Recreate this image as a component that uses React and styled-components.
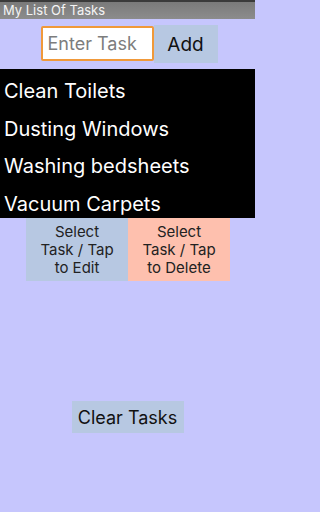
import React, { useState } from "react";
import styled, { createGlobalStyle } from "styled-components";

const GlobalStyle = createGlobalStyle`
  html, body {
    margin: 0;
    padding: 0;
    background-color: #c6c6fd;
  }
  body {
    font-family: "Inter", "Noto Sans", sans-serif;
  }
`;

const Screen = styled.div`
  width: 255px;
  height: 512px;
  display: flex;
  flex-direction: column;
  background-color: #c6c6fd;
`;

const TitleBar = styled.div`
  height: 17px;
  border-top: 2px solid #3a3a3a;
  background: linear-gradient(#7a7a7a, #8c8c8c);
  color: #f4f4f4;
  font-size: 13px;
  line-height: 17px;
  padding-left: 3px;
`;

const AddRow = styled.form`
  display: flex;
  justify-content: center;
  align-items: flex-start;
  padding-top: 6px;
  height: 44px;
  padding-left: 3px;
`;

const TaskInput = styled.input`
  box-sizing: border-box;
  width: 113px;
  height: 35px;
  margin-top: 1px;
  border: 2px solid #f0993a;
  border-radius: 2px;
  background: #fff;
  padding: 0 5px;
  font-family: inherit;
  font-size: 18px;
  color: #333;
  outline: none;

  &::placeholder {
    color: #7d7d7d;
  }
`;

const AddButton = styled.button`
  width: 64px;
  height: 38px;
  border: 0;
  background-color: #b7c8e2;
  font-family: inherit;
  font-size: 19px;
  color: #111;
  cursor: pointer;
`;

const TaskList = styled.ul`
  list-style: none;
  margin: 0;
  padding: 4px 0 0 0;
  height: 145px;
  background-color: #000;
`;

const TaskItem = styled.li`
  height: 37.5px;
  line-height: 37px;
  padding-left: 4px;
  font-size: 20px;
  color: #fff;
`;

const ActionRow = styled.div`
  display: flex;
  justify-content: center;
  padding-left: 1px;
`;

const ActionButton = styled.button`
  width: 102px;
  height: 63px;
  border: 0;
  background-color: ${(p) => p.$bg};
  font-family: inherit;
  font-size: 15px;
  line-height: 18px;
  color: #222;
  padding: 1px 12px 0;
  cursor: pointer;
`;

const ClearWrap = styled.div`
  display: flex;
  justify-content: center;
  margin-top: 120px;
`;

const ClearButton = styled.button`
  width: 112px;
  height: 32px;
  border: 0;
  background-color: #b7c8e2;
  font-family: inherit;
  font-size: 18px;
  color: #111;
  cursor: pointer;
`;

const App = () => {
  const [value, setValue] = useState("");
  const [tasks, setTasks] = useState([
    "Clean Toilets",
    "Dusting Windows",
    "Washing bedsheets",
    "Vacuum Carpets",
  ]);

  const onSubmit = (event) => {
    event.preventDefault();
    if (value.trim()) setTasks([...tasks, value.trim()]);
    setValue("");
  };

  return (
    <Screen>
      <GlobalStyle />
      <TitleBar>My List Of Tasks</TitleBar>
      <AddRow onSubmit={onSubmit}>
        <TaskInput
          type="text"
          placeholder="Enter Task"
          value={value}
          onChange={(e) => setValue(e.target.value)}
        />
        <AddButton type="submit">Add</AddButton>
      </AddRow>
      <TaskList>
        {tasks.map((task, i) => (
          <TaskItem key={i}>{task}</TaskItem>
        ))}
      </TaskList>
      <ActionRow>
        <ActionButton $bg="#b7c8e2">Select Task / Tap to Edit</ActionButton>
        <ActionButton $bg="#fec0ae">Select Task / Tap to Delete</ActionButton>
      </ActionRow>
      <ClearWrap>
        <ClearButton onClick={() => setTasks([])}>Clear Tasks</ClearButton>
      </ClearWrap>
    </Screen>
  );
};

export default App;
